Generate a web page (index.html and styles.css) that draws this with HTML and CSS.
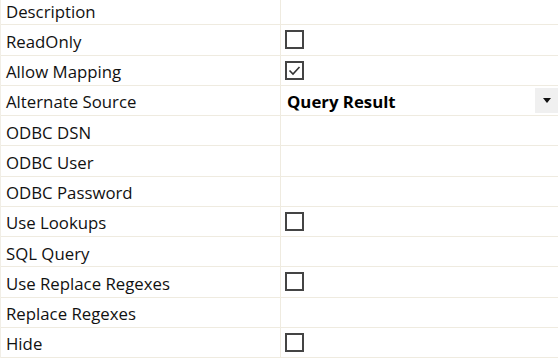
FILE: index.html
```html
<!DOCTYPE html>
<html lang="en">
<head>
    <meta charset="UTF-8">
    <title>Properties</title>
    <link rel="stylesheet" href="styles.css">
</head>
<body>
    <div class="grid">
        <div class="row"><div class="name">Description</div><div class="value"></div></div>
        <div class="row"><div class="name">ReadOnly</div><div class="value"><span class="check"></span></div></div>
        <div class="row"><div class="name">Allow Mapping</div><div class="value"><span class="check">
            <svg width="15" height="15" viewBox="0 0 15 15"><path d="M2.5 7.5 L6 11 L12.5 4" fill="none" stroke="#333" stroke-width="1.6"/></svg>
        </span></div></div>
        <div class="row"><div class="name">Alternate Source</div><div class="value select"><span class="bold">Query Result</span><span class="drop"><svg width="8" height="5" viewBox="0 0 8 5"><path d="M0 0 H8 L4 5 Z" fill="#111"/></svg></span></div></div>
        <div class="row"><div class="name">ODBC DSN</div><div class="value"></div></div>
        <div class="row"><div class="name">ODBC User</div><div class="value"></div></div>
        <div class="row"><div class="name">ODBC Password</div><div class="value"></div></div>
        <div class="row"><div class="name">Use Lookups</div><div class="value"><span class="check"></span></div></div>
        <div class="row"><div class="name">SQL Query</div><div class="value"></div></div>
        <div class="row"><div class="name">Use Replace Regexes</div><div class="value"><span class="check"></span></div></div>
        <div class="row"><div class="name">Replace Regexes</div><div class="value"></div></div>
        <div class="row"><div class="name">Hide</div><div class="value"><span class="check"></span></div></div>
    </div>
</body>
</html>
```

FILE: styles.css
```css
body {
    margin: 0;
    background: #fff;
    font-family: "Open Sans", "Noto Sans", sans-serif;
    font-size: 16.8px;
    color: #111;
    overflow: hidden;
}

.grid {
    margin-top: -5px;
    border-left: 1px solid #f1eee6;
}

.row {
    display: grid;
    grid-template-columns: 280px 1fr;
    height: 29.25px;
    border-bottom: 1px solid #efebe0;
}

.name {
    display: flex;
    align-items: center;
    padding: 3px 0 0 5px;
    border-right: 1px solid #efebe0;
    white-space: nowrap;
}

.value {
    display: flex;
    align-items: center;
    padding-left: 4px;
}

.check {
    width: 15px;
    height: 15px;
    border: 2px solid #444;
    display: flex;
    align-items: center;
    justify-content: center;
}

.select {
    justify-content: space-between;
    padding: 2px 0 0 6px;
}

.bold {
    font-weight: bold;
    color: #000;
}

.drop {
    width: 23px;
    align-self: stretch;
    margin: 0 0 2px;
    background: #f0f0f0;
    display: flex;
    align-items: center;
    justify-content: center;
}
```
